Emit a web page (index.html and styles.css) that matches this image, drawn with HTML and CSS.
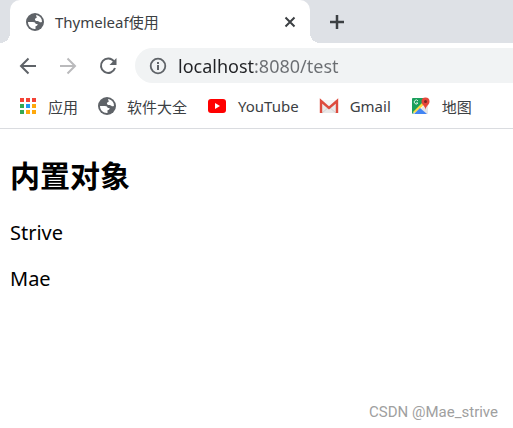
FILE: index.html
```html
<!DOCTYPE html>
<html lang="zh-CN">
<head>
    <meta charset="UTF-8">
    <meta name="viewport" content="width=device-width, initial-scale=1.0">
    <title>Thymeleaf使用</title>
    <link rel="stylesheet" href="styles.css">
</head>
<body>
    <svg class="symbols" aria-hidden="true">
        <symbol id="globe" viewBox="0 0 18 18">
            <circle cx="9" cy="9" r="9" fill="#5f6368"/>
            <path d="M10 2c2.700.3 4.800 2 5.700 4.400l.3 2.300c-.8.900-2 .8-2.700.1-.6-.6-1.300-.8-2.400-.8-1.200 0-2-.6-2-1.500 0-1 .6-1.400 1.400-1.600.6-.2.500-.9.100-1.500zM2 9h5c1.600 0 2.700.8 2.700 2.100h1.900c0 1.400-.8 2.100-2.100 2.100v2.700C5.400 16.300 2 13.100 2 9z" fill="#fff"/>
        </symbol>
    </svg>

    <div class="wrap">
        <header class="browser">
            <div class="tab-bar">
                <div class="tab">
                    <svg class="icon"><use href="#globe"/></svg>
                    <span class="tab-title">Thymeleaf使用</span>
                    <button type="button" class="tab-close" aria-label="关闭">
                        <svg width="12" height="12" viewBox="0 0 12 12"><path d="M1.500 1.500l9 9M10.500 1.500l-9 9" stroke="#3c4043" stroke-width="2"/></svg>
                    </button>
                </div>
                <button type="button" class="tab-new" aria-label="新标签页">
                    <svg width="16" height="16" viewBox="0 0 16 16"><path d="M8 1v14M1 8h14" stroke="#3c4043" stroke-width="2.500"/></svg>
                </button>
            </div><!--tab-bar-->

            <div class="toolbar">
                <button type="button" class="nav-btn" aria-label="后退">
                    <svg width="18" height="18" viewBox="0 0 18 18"><path d="M17 9H2M9.500 1.500L2 9l7.500 7.500" fill="none" stroke="#5f6368" stroke-width="2"/></svg>
                </button>
                <button type="button" class="nav-btn" aria-label="前进" disabled>
                    <svg width="18" height="18" viewBox="0 0 18 18"><path d="M1 9h15M8.500 1.500L16 9l-7.500 7.500" fill="none" stroke="#bababc" stroke-width="2"/></svg>
                </button>
                <button type="button" class="nav-btn" aria-label="重新加载">
                    <svg width="18" height="18" viewBox="0 0 18 18"><path d="M15 4.500A7.200 7.200 0 1 0 16 11" fill="none" stroke="#5f6368" stroke-width="2"/><path d="M17.500 1v7h-7z" fill="#5f6368"/></svg>
                </button>
                <form class="address">
                    <svg width="18" height="18" viewBox="0 0 18 18"><circle cx="9" cy="9" r="7.300" fill="none" stroke="#5f6368" stroke-width="1.800"/><path d="M9 8v5M9 5v2" stroke="#5f6368" stroke-width="2"/></svg>
                    <input type="text" class="address-input" aria-label="地址" value="localhost:8080/test">
                </form>
            </div><!--toolbar-->

            <nav class="bookmarks">
                <a href="#">
                    <svg class="icon" viewBox="0 0 18 18">
                        <path d="M1 1h4v4H1zM7 1h4v4H7zM13 1h4v4h-4z" fill="#f44336"/>
                        <path d="M1 7h4v4H1zM1 13h4v4H1z" fill="#34a853"/>
                        <path d="M7 7h4v4H7z" fill="#2196f3"/>
                        <path d="M13 7h4v4h-4zM7 13h4v4H7zM13 13h4v4h-4z" fill="#ffa80b"/>
                    </svg>
                    应用
                </a>
                <a href="#">
                    <svg class="icon"><use href="#globe"/></svg>
                    软件大全
                </a>
                <a href="#">
                    <svg class="icon wide" viewBox="0 0 20 18"><rect x="1" y="2" width="18" height="14" rx="3" fill="#f00"/><path d="M8 6v6l5-3z" fill="#fff"/></svg>
                    YouTube
                </a>
                <a href="#">
                    <svg class="icon wide" viewBox="0 0 20 18">
                        <path d="M1 3h18v13H1z" fill="#e9e9e9"/>
                        <path d="M3 16l7-6 7 6" fill="none" stroke="#d2d2d2"/>
                        <path d="M3 3h14l-7 6z" fill="#f5f5f5"/>
                        <path d="M2 16V4l8 7 8-7v12" fill="none" stroke="#dd4b3e" stroke-width="2.400"/>
                    </svg>
                    Gmail
                </a>
                <a href="#">
                    <svg class="icon wide" viewBox="0 0 20 18">
                        <rect x="1" y="1" width="16" height="16" rx="1" fill="#e6e6e6"/>
                        <path d="M1 16V2q0-1 1-1h11v5L2 17z" fill="#1b9f5c"/>
                        <path d="M2 16L13 5l2 2L4 17z" fill="#fff"/>
                        <path d="M2 15L12 5l2 2L4 16z" fill="#ffda43"/>
                        <path d="M3 17l6-6 7 6z" fill="#4285f4"/>
                        <path d="M7 4a2 2 0 1 0 0 2H5" fill="none" stroke="#d7f0e2"/>
                        <path d="M14.500 13c0-4-4-5-4-8.500a4 4 0 0 1 8 0c0 3.500-4 4.500-4 8.500z" fill="#e5463a"/>
                        <circle cx="14.500" cy="4.500" r="1.500" fill="#7a2520"/>
                    </svg>
                    地图
                </a>
            </nav><!--bookmarks-->
        </header>

        <main class="page">
            <h2>内置对象</h2>
            <p>Strive</p>
            <p>Mae</p>
        </main>

        <footer class="watermark">CSDN @Mae_strive</footer>
    </div><!--wrap-->
</body>
</html>
```
FILE: styles.css
```css
*{
    margin: 0;
    padding: 0;
    box-sizing: border-box;
}
body{
    background-color: #fff;
    font-family: "Noto Sans", "Noto Sans CJK SC", sans-serif;
    color: #000;
}
a{
    color: inherit;
    text-decoration: none;
}
button{
    border: 0;
    background: none;
    display: flex;
    align-items: center;
    justify-content: center;
}
svg{
    display: block;
    flex-shrink: 0;
}
.symbols{
    display: none;
}
.wrap{
    min-height: 100vh;
    display: flex;
    flex-direction: column;
}
.icon{
    width: 18px;
    height: 18px;
}
.icon.wide{
    width: 20px;
}

/* tabs */
.tab-bar{
    display: flex;
    height: 43px;
    padding-left: 10px;
    background-color: #dee1e6;
}
.tab{
    position: relative;
    display: flex;
    align-items: center;
    width: 300px;
    padding: 0 12px 0 16px;
    border-radius: 10px 10px 0 0;
    background-color: #fff;
}
.tab::before,
.tab::after{
    content: "";
    position: absolute;
    bottom: 0;
    width: 10px;
    height: 10px;
}
.tab::before{
    right: 100%;
    background: radial-gradient(circle at 0 0, transparent 10px, #fff 10px);
}
.tab::after{
    left: 100%;
    background: radial-gradient(circle at 100% 0, transparent 10px, #fff 10px);
}
.tab-title{
    flex: 1;
    margin-left: 11px;
    font-size: 15px;
    color: #3c4043;
}
.tab-close{
    width: 16px;
    height: 16px;
}
.tab-new{
    width: 28px;
    margin-left: 13px;
}

/* address row */
.toolbar{
    display: flex;
    align-items: center;
    height: 45px;
    padding-left: 8px;
}
.nav-btn{
    width: 40px;
    height: 35px;
}
.address{
    flex: 1;
    display: flex;
    align-items: center;
    height: 35px;
    margin-left: 7px;
    padding-left: 14px;
    border-radius: 18px 0 0 18px;
    background-color: #f1f3f4;
}
.address-input{
    flex: 1;
    min-width: 0;
    margin-left: 11px;
    border: 0;
    outline: 0;
    font-family: inherit;
    font-size: 18px;
    color: transparent;
    /* host is darker than port and path */
    background: linear-gradient(to right, #202124 76px, #6b6e72 76px);
    -webkit-background-clip: text;
    background-clip: text;
}

/* bookmarks */
.bookmarks{
    display: flex;
    align-items: center;
    gap: 20px;
    height: 41px;
    padding-left: 19px;
    padding-bottom: 4px;
    border-bottom: 1px solid #dadce0;
    font-size: 15px;
    color: #3c4043;
    white-space: nowrap;
}
.bookmarks a{
    display: flex;
    align-items: center;
    gap: 11px;
}

/* page */
.page{
    flex: 1;
    padding: 23px 10px;
}
.page h2{
    margin-bottom: 18px;
    font-size: 30px;
    line-height: 48px;
}
.page p{
    margin-bottom: 16px;
    font-size: 20px;
    line-height: 30px;
}
.watermark{
    padding: 0 15px 6px;
    text-align: right;
    font-family: Roboto, "Liberation Sans", sans-serif;
    font-size: 15px;
    line-height: 20px;
    color: #a0a0a0;
}
```
